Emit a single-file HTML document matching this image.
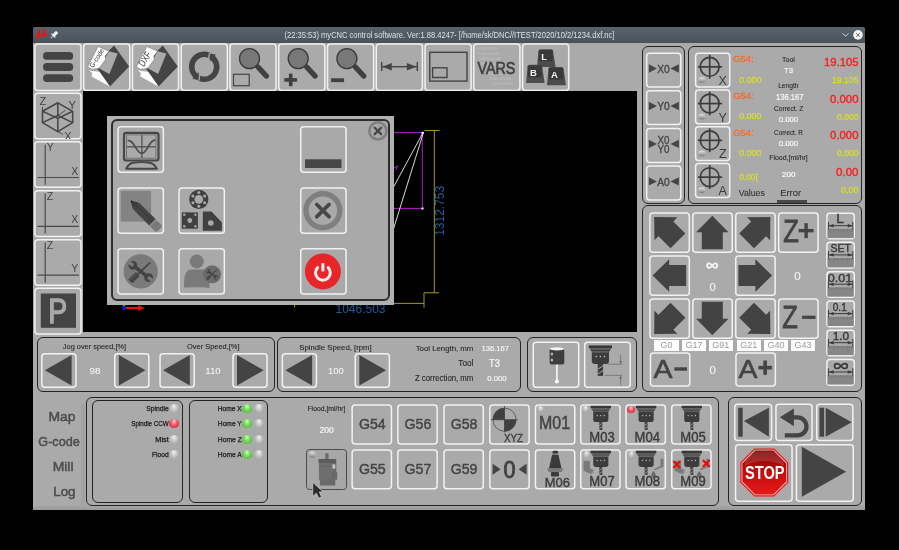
<!DOCTYPE html><html><head><meta charset="utf-8"><style>
html,body{margin:0;padding:0}
body{width:899px;height:550px;background:#000;position:relative;overflow:hidden;font-family:"Liberation Sans",sans-serif}
.a,.b,.p,.t,.s,.led{position:absolute;box-sizing:border-box}
.t{white-space:nowrap}
.s,.a{will-change:transform}
.b{border:1.5px solid #f4f4f4;border-radius:3.5px;background:#a9a9a9}
.p{border:1.4px solid #242424;border-radius:6px}
.led{border-radius:50%;background:radial-gradient(ellipse at 50% 28%,#f2f2f2 0,#cfcfcf 30%,#b4b4b4 62%,#8e8e8e 100%)}
.lg{background:radial-gradient(ellipse at 50% 28%,#d8ffd0 0,#8ae070 30%,#62cc48 62%,#3a9a2a 100%)}
.lr{background:radial-gradient(ellipse at 50% 28%,#ffe0e0 0,#f87080 30%,#ee3848 62%,#b01828 100%)}
</style></head><body>
<svg width="0" height="0" style="position:absolute"><defs><linearGradient id="ledg" x1="0" y1="0" x2="0" y2="1"><stop offset="0" stop-color="#e4e4e4"/><stop offset="0.45" stop-color="#b8b8b8"/><stop offset="1" stop-color="#7c7c7c"/></linearGradient></defs></svg>
<div class="a" style="left:33.2px;top:27px;width:832.3px;height:483.3px;background:linear-gradient(#aaaaaa 0,#aaaaaa 98.8%,#9a9a9a 100%);border-radius:3px 3px 0 0"></div>
<div class="a" style="left:33.2px;top:27px;width:832.3px;height:15.7px;background:linear-gradient(#59636c,#48525b);border-radius:3px 3px 0 0"></div>
<svg class="s" style="left:33px;top:27px;" width="31" height="17" viewBox="0 0 31 17"><g transform="translate(0.000,0.000)"><path d="M3.4,12.6 L6.6,3 Q5,9 7.4,9 Q10,9 11.8,3 Q10.4,9 12,9 Q12.9,9 13.4,7.6" fill="none" stroke="#ff0a0a" stroke-width="1.7" stroke-linecap="round" stroke-linejoin="round"/><g transform="translate(21,8) rotate(45)"><rect x="-1.6" y="-4.5" width="3.2" height="5" rx="0.8" fill="#f2f2f2"/><rect x="-2.6" y="0.3" width="5.2" height="1.2" fill="#f2f2f2"/><rect x="-0.4" y="1.5" width="0.8" height="3" fill="#e0e0e0"/></g><path d="M817,0" /></g></svg>
<svg class="s" style="left:838px;top:28px;" width="29" height="15" viewBox="0 0 29 15"><g transform="translate(0.000,0.000)"><polyline points="4.5,5.3 7.5,8.3 10.5,5.3" fill="none" stroke="#dfe3e6" stroke-width="0.9"/><circle cx="20" cy="6.9" r="4.8" fill="#f4f4f4"/><g stroke="#555" stroke-width="0.9"><line x1="18.2" y1="5.1" x2="21.8" y2="8.7"/><line x1="21.8" y1="5.1" x2="18.2" y2="8.7"/></g></g></svg>
<svg class="s" style="left:0;top:0" width="899" height="550"><g fill="none" stroke="#f2f2f2" stroke-width="1.5"><rect x="34.90" y="43.95" width="46.10" height="46.60" rx="3"/><rect x="83.67" y="43.95" width="46.10" height="46.60" rx="3"/><rect x="132.44" y="43.95" width="46.10" height="46.60" rx="3"/><rect x="181.21" y="43.95" width="46.10" height="46.60" rx="3"/><rect x="229.98" y="43.95" width="46.10" height="46.60" rx="3"/><rect x="278.75" y="43.95" width="46.10" height="46.60" rx="3"/><rect x="327.52" y="43.95" width="46.10" height="46.60" rx="3"/><rect x="376.29" y="43.95" width="46.10" height="46.60" rx="3"/><rect x="425.06" y="43.95" width="46.10" height="46.60" rx="3"/><rect x="473.83" y="43.95" width="46.10" height="46.60" rx="3"/><rect x="522.60" y="43.95" width="46.10" height="46.60" rx="3"/><rect x="34.90" y="93.25" width="46.10" height="45.60" rx="3"/><rect x="34.90" y="141.75" width="46.10" height="45.60" rx="3"/><rect x="34.90" y="190.85" width="46.10" height="45.60" rx="3"/><rect x="34.90" y="239.65" width="46.10" height="45.60" rx="3"/><rect x="34.90" y="288.35" width="46.10" height="45.60" rx="3"/><rect x="646.65" y="53.20" width="34.15" height="33.90" rx="3"/><rect x="646.65" y="90.65" width="34.15" height="33.90" rx="3"/><rect x="646.65" y="128.55" width="34.15" height="33.90" rx="3"/><rect x="646.65" y="166.05" width="34.15" height="33.90" rx="3"/><rect x="695.60" y="53.20" width="34.10" height="33.90" rx="3"/><rect x="695.60" y="89.90" width="34.10" height="33.90" rx="3"/><rect x="695.60" y="126.70" width="34.10" height="33.90" rx="3"/><rect x="695.60" y="163.50" width="34.10" height="33.90" rx="3"/><rect x="649.90" y="213.10" width="39.40" height="39.20" rx="3"/><rect x="692.85" y="213.10" width="39.40" height="39.20" rx="3"/><rect x="735.75" y="213.10" width="39.40" height="39.20" rx="3"/><rect x="649.90" y="256.10" width="39.40" height="39.20" rx="3"/><rect x="735.75" y="256.10" width="39.40" height="39.20" rx="3"/><rect x="649.90" y="299.05" width="39.40" height="39.20" rx="3"/><rect x="692.85" y="299.05" width="39.40" height="39.20" rx="3"/><rect x="735.75" y="299.05" width="39.40" height="39.20" rx="3"/><rect x="778.65" y="213.10" width="39.40" height="39.20" rx="3"/><rect x="778.65" y="299.05" width="39.40" height="39.20" rx="3"/><rect x="650.45" y="353.05" width="39.40" height="32.90" rx="3"/><rect x="735.95" y="353.05" width="39.40" height="32.90" rx="3"/><rect x="826.95" y="213.15" width="27.30" height="25.70" rx="3"/><rect x="826.95" y="242.35" width="27.30" height="25.70" rx="3"/><rect x="826.95" y="271.65" width="27.30" height="25.70" rx="3"/><rect x="826.95" y="301.05" width="27.30" height="25.70" rx="3"/><rect x="826.95" y="330.15" width="27.30" height="25.70" rx="3"/><rect x="826.95" y="359.45" width="27.30" height="25.70" rx="3"/><rect x="41.85" y="353.65" width="34.10" height="33.70" rx="3"/><rect x="114.75" y="353.65" width="34.10" height="33.70" rx="3"/><rect x="160.05" y="353.65" width="34.10" height="33.70" rx="3"/><rect x="232.95" y="353.65" width="34.10" height="33.70" rx="3"/><rect x="282.35" y="353.65" width="34.10" height="33.70" rx="3"/><rect x="355.25" y="353.65" width="34.10" height="33.70" rx="3"/><rect x="533.25" y="342.15" width="45.50" height="45.10" rx="3"/><rect x="584.65" y="342.15" width="45.60" height="45.10" rx="3"/><rect x="352.15" y="405.05" width="39.30" height="38.90" rx="3"/><rect x="352.15" y="449.95" width="39.30" height="38.90" rx="3"/><rect x="397.85" y="405.05" width="39.30" height="38.90" rx="3"/><rect x="397.85" y="449.95" width="39.30" height="38.90" rx="3"/><rect x="443.95" y="405.05" width="39.30" height="38.90" rx="3"/><rect x="443.95" y="449.95" width="39.30" height="38.90" rx="3"/><rect x="489.85" y="405.05" width="39.30" height="38.90" rx="3"/><rect x="489.85" y="449.95" width="39.30" height="38.90" rx="3"/><rect x="535.45" y="405.05" width="39.30" height="38.90" rx="3"/><rect x="535.45" y="449.95" width="39.30" height="38.90" rx="3"/><rect x="580.75" y="405.05" width="39.30" height="38.90" rx="3"/><rect x="580.75" y="449.95" width="39.30" height="38.90" rx="3"/><rect x="626.05" y="405.05" width="39.30" height="38.90" rx="3"/><rect x="626.05" y="449.95" width="39.30" height="38.90" rx="3"/><rect x="671.75" y="405.05" width="39.30" height="38.90" rx="3"/><rect x="671.75" y="449.95" width="39.30" height="38.90" rx="3"/><rect x="734.75" y="404.35" width="36.80" height="36.10" rx="3"/><rect x="775.95" y="404.35" width="36.10" height="36.10" rx="3"/><rect x="816.75" y="404.35" width="36.10" height="36.10" rx="3"/><rect x="735.55" y="444.65" width="56.50" height="56.50" rx="3"/><rect x="796.45" y="444.65" width="56.80" height="56.50" rx="3"/></g></svg>
<svg class="s" style="left:35px;top:43px;" width="48" height="49" viewBox="0 0 48 49"><g transform="translate(0.000,0.000)"><g fill="#444"><rect x="8" y="9" width="30.2" height="7.8" rx="3.9"/><rect x="8" y="20.1" width="30.2" height="7.8" rx="3.9"/><rect x="8" y="31.2" width="30.2" height="7.8" rx="3.9"/></g></g></svg>
<svg class="s" style="left:83px;top:43px;" width="48" height="49" viewBox="0 0 48 49"><g transform="translate(0.700,0.000)"><polygon fill="#454545" points="30.4,2.6 45.4,23.6 26.2,43.6 11,22"/><polygon fill="#aaa" points="25.3,8.3 34,10.5 25.7,31 15.3,25.3"/><polygon fill="#fff" stroke="#555" stroke-width="0.4" points="14.4,3.5 25.3,8.3 21.4,13.1 21.8,16.6 15.3,25.3 8.3,26.2 3.9,24"/><polygon fill="#fff" points="5.2,27 8.3,27.9 15.7,28.8 26.2,43.6 7.9,33.6 8.5,30"/><text x="0" y="0" transform="translate(9.6,25.2) rotate(-58)" font-size="7" fill="#333" font-family="Liberation Sans" textLength="21" lengthAdjust="spacingAndGlyphs">G-code</text></g></svg>
<svg class="s" style="left:132px;top:43px;" width="48" height="49" viewBox="0 0 48 49"><g transform="translate(0.400,0.000)"><polygon fill="#454545" points="30.4,2.6 45.4,23.6 26.2,43.6 11,22"/><polygon fill="#aaa" points="25.3,8.3 34,10.5 25.7,31 15.3,25.3"/><polygon fill="#fff" stroke="#555" stroke-width="0.4" points="14.4,3.5 25.3,8.3 21.4,13.1 21.8,16.6 15.3,25.3 8.3,26.2 3.9,24"/><polygon fill="#fff" points="5.2,27 8.3,27.9 15.7,28.8 26.2,43.6 7.9,33.6 8.5,30"/><text x="0" y="0" transform="translate(11.4,24.2) rotate(-58)" font-size="10" fill="#333" font-family="Liberation Sans" textLength="15" lengthAdjust="spacingAndGlyphs">DXF</text></g></svg>
<svg class="s" style="left:181px;top:43px;" width="48" height="49" viewBox="0 0 48 49"><g transform="translate(0.000,0.000)"><g fill="none" stroke="#444" stroke-width="5.5"><path d="M28.06,12.33 A12.45,12.45 0 0 0 17.55,34.89"/><path d="M28.85,12.71 A12.45,12.45 0 0 1 18.33,35.27"/></g><g fill="#444"><polygon points="28.6,11 35,11.6 28.6,18.6"/><polygon points="17.8,36.6 11.4,36 17.8,29"/></g><g stroke="#a9a9a9" stroke-width="1"><line x1="28.1" y1="10" x2="28.1" y2="19"/><line x1="18.3" y1="28.6" x2="18.3" y2="37.6"/></g></g></svg>
<svg class="s" style="left:229px;top:43px;" width="48" height="49" viewBox="0 0 48 49"><g transform="translate(0.700,0.000)"><line x1="28.3" y1="24" x2="36.6" y2="33" stroke="#404040" stroke-width="5.4" stroke-linecap="round"/><circle cx="19.8" cy="15.6" r="10" fill="#787878" stroke="#3a3a3a" stroke-width="1.3"/><rect x="3.8" y="31.3" width="15.7" height="11.4" fill="none" stroke="#444" stroke-width="1.2"/></g></svg>
<svg class="s" style="left:278px;top:43px;" width="48" height="49" viewBox="0 0 48 49"><g transform="translate(0.400,0.000)"><line x1="28.3" y1="24" x2="36.6" y2="33" stroke="#404040" stroke-width="5.4" stroke-linecap="round"/><circle cx="19.8" cy="15.6" r="10" fill="#787878" stroke="#3a3a3a" stroke-width="1.3"/><rect x="5.9" y="35.1" width="12.8" height="3.6" fill="#404040"/><rect x="10.5" y="30.6" width="3.6" height="12.6" fill="#404040"/></g></svg>
<svg class="s" style="left:327px;top:43px;" width="48" height="49" viewBox="0 0 48 49"><g transform="translate(0.100,0.000)"><line x1="28.3" y1="24" x2="36.6" y2="33" stroke="#404040" stroke-width="5.4" stroke-linecap="round"/><circle cx="19.8" cy="15.6" r="10" fill="#787878" stroke="#3a3a3a" stroke-width="1.3"/><rect x="4" y="35.3" width="13" height="3.8" fill="#404040"/></g></svg>
<svg class="s" style="left:375px;top:43px;" width="48" height="49" viewBox="0 0 48 49"><g transform="translate(0.800,0.000)"><g fill="#454545"><rect x="5.2" y="19" width="1.4" height="9"/><rect x="40.8" y="19" width="1.4" height="9"/><rect x="6" y="23" width="35" height="1.4"/><polygon points="6.5,23.7 16,20 16,27.4"/><polygon points="40.8,23.7 31,20 31,27.4"/></g></g></svg>
<svg class="s" style="left:424px;top:43px;" width="48" height="49" viewBox="0 0 48 49"><g transform="translate(0.400,0.000)"><g fill="none" stroke="#444" stroke-width="1.4"><rect x="5.4" y="9.3" width="37.2" height="28.8"/><rect x="8.2" y="24.8" width="14.4" height="9.7"/></g></g></svg>
<svg class="s" style="left:473px;top:43px;" width="48" height="49" viewBox="0 0 48 49"><g transform="translate(0.100,0.000)"><text x="2" y="7" font-size="3.2" fill="#c4c4c4" font-family="Liberation Sans">#5029=123.456</text><text x="4" y="12" font-size="3.2" fill="#c4c4c4" font-family="Liberation Sans">#5029=123.456</text><text x="6" y="17" font-size="3.2" fill="#c4c4c4" font-family="Liberation Sans">#5029=123.456</text><text x="8" y="22" font-size="3.2" fill="#c4c4c4" font-family="Liberation Sans">#5029=123.456</text><text x="14" y="32" font-size="3.2" fill="#c4c4c4" font-family="Liberation Sans">#5029=123.456</text><text x="16" y="37" font-size="3.2" fill="#c4c4c4" font-family="Liberation Sans">#5029=123.456</text><text x="18" y="42" font-size="3.2" fill="#c4c4c4" font-family="Liberation Sans">#5029=123.456</text><text x="23.3" y="30.6" text-anchor="middle" font-size="16" fill="#404040" stroke="#404040" stroke-width="0.6" font-family="Liberation Sans" textLength="38" lengthAdjust="spacingAndGlyphs">VARS</text></g></svg>
<svg class="s" style="left:521px;top:43px;" width="48" height="49" viewBox="0 0 48 49"><g transform="translate(0.800,0.000)"><path d="M15.2,24.0 L16.7,7.8 Q17.2,6.3 18.7,6.3 L29.200000000000003,6.3 Q30.700000000000003,6.3 31.200000000000003,7.8 L33.7,24.0 Z" fill="#4c4c4c"/><rect x="17.0" y="7.1" width="13.9" height="11.2" rx="1" fill="#393939"/><text x="22.45" y="16.95" text-anchor="middle" font-size="9.5" font-weight="bold" fill="#f4f4f4" font-family="Liberation Sans">L</text><path d="M4.3,39.9 L5.8,23.2 Q6.3,21.7 7.8,21.7 L18.3,21.7 Q19.8,21.7 20.3,23.2 L22.8,39.9 Z" fill="#4c4c4c"/><rect x="6.1" y="22.5" width="13.9" height="11.7" rx="1" fill="#393939"/><text x="11.55" y="32.599999999999994" text-anchor="middle" font-size="9.5" font-weight="bold" fill="#f4f4f4" font-family="Liberation Sans">B</text><path d="M25.2,42.2 L26.7,25.5 Q27.2,24 28.7,24 L39.7,24 Q41.2,24 41.7,25.5 L44.2,42.2 Z" fill="#4c4c4c"/><rect x="27.0" y="24.8" width="14.4" height="11.7" rx="1" fill="#393939"/><text x="32.7" y="34.9" text-anchor="middle" font-size="9.5" font-weight="bold" fill="#f4f4f4" font-family="Liberation Sans">A</text></g></svg>
<svg class="s" style="left:35px;top:92px;" width="48" height="47" viewBox="0 0 48 47"><g transform="translate(0.000,0.500)"><g fill="none" stroke="#474747" stroke-width="1.55" stroke-linejoin="round"><polygon points="22.8,10.3 37.7,18.8 37.7,30.1 22.8,39.1 7.5,30.1 7.5,18.8"/><polyline points="7.5,18.8 22.8,25.9 37.7,18.8"/><line x1="22.8" y1="25.9" x2="22.8" y2="39.1"/><polyline points="7.5,30.1 22.8,23 37.7,30.1"/><line x1="22.8" y1="23" x2="22.8" y2="10.3"/></g><g stroke="#444" stroke-width="0.9"><line x1="7.5" y1="18.8" x2="7.5" y2="14.5"/><line x1="22.8" y1="23" x2="30.6" y2="17.8"/><line x1="22.8" y1="39.1" x2="28" y2="42"/></g><g font-family="Liberation Sans" font-size="11" fill="#444"><text x="4.6" y="12">Z</text><text x="33.5" y="16">Y</text><text x="29.3" y="47">X</text></g></g></svg>
<svg class="s" style="left:35px;top:141px;" width="48" height="47" viewBox="0 0 48 47"><g transform="translate(0.000,0.300)"><g stroke="#4a4a4a" stroke-width="1.2"><line x1="10.2" y1="3.5" x2="10.2" y2="43.5"/><line x1="2.5" y1="36.2" x2="44" y2="36.2"/></g><g font-family="Liberation Sans" font-size="10.5" fill="#444"><text x="11.8" y="9.6">Y</text><text x="36.2" y="33.3">X</text></g></g></svg>
<svg class="s" style="left:35px;top:190px;" width="48" height="47" viewBox="0 0 48 47"><g transform="translate(0.000,0.100)"><g stroke="#4a4a4a" stroke-width="1.2"><line x1="10.2" y1="3.5" x2="10.2" y2="43.5"/><line x1="2.5" y1="36.2" x2="44" y2="36.2"/></g><g font-family="Liberation Sans" font-size="10.5" fill="#444"><text x="11.8" y="9.6">Z</text><text x="36.2" y="33.3">X</text></g></g></svg>
<svg class="s" style="left:35px;top:238px;" width="48" height="47" viewBox="0 0 48 47"><g transform="translate(0.000,0.900)"><g stroke="#4a4a4a" stroke-width="1.2"><line x1="10.2" y1="3.5" x2="10.2" y2="43.5"/><line x1="2.5" y1="36.2" x2="44" y2="36.2"/></g><g font-family="Liberation Sans" font-size="10.5" fill="#444"><text x="11.8" y="9.6">Z</text><text x="36.2" y="33.3">Y</text></g></g></svg>
<svg class="s" style="left:35px;top:287px;" width="48" height="47" viewBox="0 0 48 47"><g transform="translate(0.000,0.700)"><rect x="5.8" y="5.8" width="35.2" height="34.3" fill="#444"/><text x="13.3" y="35" font-family="Liberation Sans" font-size="35" fill="#a8a8a8" stroke="#a8a8a8" stroke-width="1.3" textLength="19" lengthAdjust="spacingAndGlyphs">P</text></g></svg>
<div class="a" style="left:83px;top:91.2px;width:553.5px;height:240.6px;background:#000"></div>
<svg class="s" style="left:0px;top:0px;" width="900" height="551" viewBox="0 0 900 551"><g transform="translate(0.000,0.000)"><g fill="none" stroke-width="1"><polyline stroke="#b01cc8" points="393,132.6 422.3,132.6 422.3,208.4 393,208.4"/><path stroke="#b01cc8" d="M393.5,168.5 L397.5,166 L396,170"/><line stroke="#d8d8d8" x1="423.2" y1="132.3" x2="393.2" y2="187.7"/><line stroke="#d8d8d8" x1="423.6" y1="132" x2="393.3" y2="229.6"/><g stroke="#a09a1c"><line x1="434.3" y1="130.5" x2="434.3" y2="292.8"/><line x1="424.6" y1="130.5" x2="439.5" y2="130.5"/><line x1="424" y1="292.8" x2="439" y2="292.8"/><line x1="393" y1="303.4" x2="424" y2="303.4"/><line x1="424" y1="292.8" x2="424" y2="307.7"/><line x1="294.6" y1="304" x2="294.6" y2="307.5"/></g></g><rect x="421.5" y="207.5" width="2" height="2" fill="#fff"/><rect x="421.5" y="131.8" width="2" height="2" fill="#fff"/><text transform="translate(444.3,235.8) rotate(-90)" font-family="Liberation Sans" font-size="12" fill="#1f5d9c" textLength="50" lengthAdjust="spacingAndGlyphs">1312.753</text><text x="335.5" y="312.5" font-family="Liberation Sans" font-size="12" fill="#1f5d9c" textLength="50" lengthAdjust="spacingAndGlyphs">1046.503</text><line x1="124" y1="308" x2="140" y2="308" stroke="#e81010" stroke-width="2.2"/><polygon points="138,305.3 144.8,308 138,310.7" fill="#e81010"/><circle cx="124" cy="308" r="2.3" fill="#1010b0"/><circle cx="124" cy="305" r="1.2" fill="#20e020"/></g></svg>
<div class="a" style="left:107.1px;top:115.9px;width:286.6px;height:188.7px;background:#b1b1b1"></div>
<div class="a" style="left:110.6px;top:119.4px;width:279.2px;height:181.5px;background:#a9a9a9;border:2px solid #2e2e2e;border-radius:6px;box-sizing:border-box"></div>
<svg class="s" style="left:0;top:0" width="899" height="550"><g fill="none" stroke="#f2f2f2" stroke-width="1.5"><rect x="118.05" y="126.85" width="45.30" height="45.30" rx="3"/><rect x="300.75" y="126.85" width="45.30" height="45.30" rx="3"/><rect x="118.05" y="187.95" width="45.30" height="45.30" rx="3"/><rect x="179.05" y="187.95" width="45.30" height="45.30" rx="3"/><rect x="300.75" y="187.95" width="45.30" height="45.30" rx="3"/><rect x="118.05" y="248.75" width="45.30" height="45.30" rx="3"/><rect x="179.05" y="248.75" width="45.30" height="45.30" rx="3"/><rect x="300.75" y="248.75" width="45.30" height="45.30" rx="3"/></g></svg>
<svg class="s" style="left:117px;top:126px;" width="48" height="48" viewBox="0 0 48 48"><g transform="translate(0.300,0.100)"><rect x="6.7" y="6.7" width="34.5" height="27.7" rx="2.2" fill="none" stroke="#474747" stroke-width="2.2"/><rect x="9.2" y="8.8" width="29.4" height="23.3" fill="none" stroke="#6e6e6e" stroke-width="0.9"/><g stroke="#4a4a4a" fill="none"><line x1="24.6" y1="9.2" x2="24.6" y2="32" stroke-width="1.2"/><line x1="9.6" y1="20.7" x2="38.3" y2="20.7" stroke-width="1.2"/><path d="M10.3,14.5 C16.5,13 19,27.3 24.4,27.3 C30,27.3 32,13 38,14.1" stroke-width="1.7"/></g><path d="M8.8,42.6 Q12,37 16,36.6 Q24,35.4 32,36.6 Q36.5,37 39.6,42.6 Z" fill="none" stroke="#474747" stroke-width="1.9" stroke-linejoin="round"/></g></svg>
<svg class="s" style="left:300px;top:126px;" width="48" height="48" viewBox="0 0 48 48"><g transform="translate(0.000,0.100)"><rect x="5" y="33.2" width="36.5" height="8.7" fill="#474747"/></g></svg>
<svg class="s" style="left:117px;top:187px;" width="48" height="48" viewBox="0 0 48 48"><g transform="translate(0.300,0.200)"><rect x="3.4" y="3.7" width="30.4" height="30.7" fill="#838383"/><g transform="translate(13.4,13.4) rotate(45)"><polygon points="0,0 7.5,-4.5 7.5,4.5" fill="#3a3a3a"/><polygon points="2.2,-1.3 2.2,1.3 0,0" fill="#222"/><rect x="7.5" y="-4.5" width="24.5" height="9" fill="#444"/><rect x="7.5" y="-1.2" width="24.5" height="1" fill="#3a3a3a"/><rect x="32" y="-4.5" width="8.6" height="9" rx="1.8" fill="#7a7a7a"/><rect x="30.6" y="-4.5" width="1.4" height="9" fill="#909090"/></g></g></svg>
<svg class="s" style="left:178px;top:187px;" width="48" height="48" viewBox="0 0 48 48"><g transform="translate(0.300,0.200)"><circle cx="20.5" cy="12.2" r="9.6" fill="#404040"/><circle cx="20.5" cy="12.2" r="4.3" fill="#a9a9a9"/><circle cx="20.5" cy="5.3999999999999995" r="1.5" fill="#a9a9a9"/><circle cx="26.388972745734183" cy="8.8" r="1.5" fill="#a9a9a9"/><circle cx="26.388972745734183" cy="15.599999999999998" r="1.5" fill="#a9a9a9"/><circle cx="20.5" cy="19.0" r="1.5" fill="#a9a9a9"/><circle cx="14.611027254265817" cy="15.599999999999998" r="1.5" fill="#a9a9a9"/><circle cx="14.611027254265817" cy="8.799999999999999" r="1.5" fill="#a9a9a9"/><rect x="3.5" y="25.2" width="16.1" height="16.3" fill="#404040"/><g fill="#a9a9a9"><circle cx="11.5" cy="33.3" r="2.4"/><circle cx="6" cy="27.6" r="1.2"/><circle cx="17.1" cy="27.6" r="1.2"/><circle cx="6" cy="39" r="1.2"/><circle cx="17.1" cy="39" r="1.2"/></g><polygon points="24.5,24.2 33.2,24.2 43.6,35.3 43.6,43.5 24.5,43.5" fill="#404040"/><circle cx="32.5" cy="35.8" r="2.8" fill="#a9a9a9"/></g></svg>
<svg class="s" style="left:300px;top:187px;" width="48" height="48" viewBox="0 0 48 48"><g transform="translate(0.000,0.200)"><circle cx="22.9" cy="23.4" r="16.9" fill="none" stroke="#7f7f7f" stroke-width="5.4"/><g stroke="#474747" stroke-width="3.8" stroke-linecap="round"><line x1="16.8" y1="17.3" x2="29" y2="29.5"/><line x1="29" y1="17.3" x2="16.8" y2="29.5"/></g></g></svg>
<svg class="s" style="left:117px;top:248px;" width="48" height="48" viewBox="0 0 48 48"><g transform="translate(0.300,0.000)"><circle cx="23.4" cy="23.4" r="17.1" fill="#7a7a7a"/><g transform="translate(23.4,23.4)"><g transform="scale(1)"><g transform="rotate(38)" fill="#444"><rect x="-9" y="-1.8" width="18" height="3.6"/><circle cx="-10" cy="0" r="4.4"/><circle cx="10" cy="0" r="4.4"/></g><g transform="rotate(38)" fill="#7a7a7a"><rect x="-15" y="-1.7" width="5.5" height="3.4"/><rect x="9.5" y="-1.7" width="5.5" height="3.4"/></g><g transform="rotate(-43)" fill="#444"><rect x="-14.5" y="-2.8" width="10.5" height="5.6" rx="1"/><rect x="-4" y="-0.9" width="17" height="1.8"/><g stroke="#7a7a7a" stroke-width="0.7"><line x1="-12" y1="-2.8" x2="-12" y2="-0.5"/><line x1="-9.5" y1="-2.8" x2="-9.5" y2="-0.5"/><line x1="-7" y1="-2.8" x2="-7" y2="-0.5"/></g></g></g></g></g></svg>
<svg class="s" style="left:178px;top:248px;" width="48" height="48" viewBox="0 0 48 48"><g transform="translate(0.300,0.000)"><circle cx="18.5" cy="13.4" r="7" fill="#7a7a7a"/><path d="M5.8,39.4 C5.5,28 7,21.6 13,21.4 L25,21.4 C31,21.6 31.5,30 31.2,40 C22,38.5 14,40 5.8,39.4 Z" fill="#7a7a7a"/><circle cx="33.8" cy="26.3" r="9" fill="#6c6c6c"/><g transform="translate(33.8,26.3)"><g transform="scale(0.5)"><g transform="rotate(38)" fill="#444"><rect x="-9" y="-1.8" width="18" height="3.6"/><circle cx="-10" cy="0" r="4.4"/><circle cx="10" cy="0" r="4.4"/></g><g transform="rotate(38)" fill="#6c6c6c"><rect x="-15" y="-1.7" width="5.5" height="3.4"/><rect x="9.5" y="-1.7" width="5.5" height="3.4"/></g><g transform="rotate(-43)" fill="#444"><rect x="-14.5" y="-2.8" width="10.5" height="5.6" rx="1"/><rect x="-4" y="-0.9" width="17" height="1.8"/><g stroke="#7a7a7a" stroke-width="0.7"><line x1="-12" y1="-2.8" x2="-12" y2="-0.5"/><line x1="-9.5" y1="-2.8" x2="-9.5" y2="-0.5"/><line x1="-7" y1="-2.8" x2="-7" y2="-0.5"/></g></g></g></g></g></svg>
<svg class="s" style="left:300px;top:248px;" width="48" height="48" viewBox="0 0 48 48"><g transform="translate(0.000,0.000)"><circle cx="22.9" cy="23.4" r="18" fill="#e8262a"/><path d="M17.6,19.6 A7.4,7.4 0 1 0 28.2,19.6" fill="none" stroke="#f4eeee" stroke-width="3" stroke-linecap="round"/><line x1="22.9" y1="15.2" x2="22.9" y2="23.4" stroke="#f4eeee" stroke-width="3" stroke-linecap="butt"/></g></svg>
<svg class="s" style="left:366px;top:119px;" width="25" height="25" viewBox="0 0 25 25"><g transform="translate(0.000,0.000)"><circle cx="11.9" cy="11.9" r="8.6" fill="#a6a6a6" stroke="#808080" stroke-width="2.6"/><g stroke="#474747" stroke-width="2.3" stroke-linecap="round"><line x1="8.7" y1="8.7" x2="15.1" y2="15.1"/><line x1="15.1" y1="8.7" x2="8.7" y2="15.1"/></g></g></svg>
<div class="p" style="left:642.1px;top:45.6px;width:42.9px;height:158.5px;"></div>
<div class="p" style="left:687.8px;top:45.6px;width:174.2px;height:158.5px;"></div>
<div class="p" style="left:642.1px;top:204.6px;width:219.9px;height:187.5px;"></div>
<svg class="s" style="left:646px;top:52px;" width="36" height="36" viewBox="0 0 36 36"><g transform="translate(0.100,0.450)"><polygon points="2.7,11.9 10.8,16.1 2.7,20.3" fill="#454545"/><polygon points="32.8,11.9 24.3,16.1 32.8,20.3" fill="#454545"/><text x="17.4" y="20.3" text-anchor="middle" font-family="Liberation Sans" font-size="11" fill="#444" stroke="#444" stroke-width="0.35" textLength="12.5" lengthAdjust="spacingAndGlyphs">X0</text></g></svg>
<svg class="s" style="left:646px;top:89px;" width="36" height="36" viewBox="0 0 36 36"><g transform="translate(0.100,0.900)"><polygon points="2.7,11.9 10.8,16.1 2.7,20.3" fill="#454545"/><polygon points="32.8,11.9 24.3,16.1 32.8,20.3" fill="#454545"/><text x="17.4" y="20.3" text-anchor="middle" font-family="Liberation Sans" font-size="11" fill="#444" stroke="#444" stroke-width="0.35" textLength="12.5" lengthAdjust="spacingAndGlyphs">Y0</text></g></svg>
<svg class="s" style="left:646px;top:127px;" width="36" height="36" viewBox="0 0 36 36"><g transform="translate(0.100,0.800)"><polygon points="2.7,11.9 10.8,16.1 2.7,20.3" fill="#454545"/><polygon points="32.8,11.9 24.3,16.1 32.8,20.3" fill="#454545"/><text x="17.4" y="16" text-anchor="middle" font-family="Liberation Sans" font-size="10" fill="#444" stroke="#444" stroke-width="0.3" textLength="12" lengthAdjust="spacingAndGlyphs">X0</text><text x="17.4" y="25.5" text-anchor="middle" font-family="Liberation Sans" font-size="10" fill="#444" stroke="#444" stroke-width="0.3" textLength="12" lengthAdjust="spacingAndGlyphs">Y0</text></g></svg>
<svg class="s" style="left:646px;top:165px;" width="36" height="36" viewBox="0 0 36 36"><g transform="translate(0.100,0.300)"><polygon points="2.7,11.9 10.8,16.1 2.7,20.3" fill="#454545"/><polygon points="32.8,11.9 24.3,16.1 32.8,20.3" fill="#454545"/><text x="17.4" y="20.3" text-anchor="middle" font-family="Liberation Sans" font-size="11" fill="#444" stroke="#444" stroke-width="0.35" textLength="12.5" lengthAdjust="spacingAndGlyphs">A0</text></g></svg>
<svg class="s" style="left:695px;top:52px;" width="36" height="37" viewBox="0 0 36 37"><g transform="translate(0.000,0.450)"><g stroke="#3c3c3c" stroke-width="1.7" fill="none"><circle cx="14.7" cy="14.4" r="9.4"/><line x1="2.9" y1="14.4" x2="27.1" y2="14.4"/><line x1="14.7" y1="2.3" x2="14.7" y2="26.2"/></g><text x="27.8" y="32.4" text-anchor="middle" font-family="Liberation Sans" font-size="12.6" fill="#3c3c3c">X</text><ellipse cx="6.85" cy="27.5" rx="3.6" ry="2.9" fill="url(#ledg)"/></g></svg>
<svg class="s" style="left:695px;top:89px;" width="36" height="37" viewBox="0 0 36 37"><g transform="translate(0.000,0.150)"><g stroke="#3c3c3c" stroke-width="1.7" fill="none"><circle cx="14.7" cy="14.4" r="9.4"/><line x1="2.9" y1="14.4" x2="27.1" y2="14.4"/><line x1="14.7" y1="2.3" x2="14.7" y2="26.2"/></g><text x="27.8" y="32.4" text-anchor="middle" font-family="Liberation Sans" font-size="12.6" fill="#3c3c3c">Y</text><ellipse cx="6.85" cy="27.5" rx="3.6" ry="2.9" fill="url(#ledg)"/></g></svg>
<svg class="s" style="left:695px;top:125px;" width="36" height="37" viewBox="0 0 36 37"><g transform="translate(0.000,0.950)"><g stroke="#3c3c3c" stroke-width="1.7" fill="none"><circle cx="14.7" cy="14.4" r="9.4"/><line x1="2.9" y1="14.4" x2="27.1" y2="14.4"/><line x1="14.7" y1="2.3" x2="14.7" y2="26.2"/></g><text x="27.8" y="32.4" text-anchor="middle" font-family="Liberation Sans" font-size="12.6" fill="#3c3c3c">Z</text><ellipse cx="6.85" cy="27.5" rx="3.6" ry="2.9" fill="url(#ledg)"/></g></svg>
<svg class="s" style="left:695px;top:162px;" width="36" height="37" viewBox="0 0 36 37"><g transform="translate(0.000,0.750)"><g stroke="#3c3c3c" stroke-width="1.7" fill="none"><circle cx="14.7" cy="14.4" r="9.4"/><line x1="2.9" y1="14.4" x2="27.1" y2="14.4"/><line x1="14.7" y1="2.3" x2="14.7" y2="26.2"/></g><text x="27.8" y="32.4" text-anchor="middle" font-family="Liberation Sans" font-size="12.6" fill="#3c3c3c">A</text><ellipse cx="6.85" cy="27.5" rx="3.6" ry="2.9" fill="url(#ledg)"/></g></svg>
<div class="a" style="left:777px;top:200.2px;width:30px;height:2.6px;background:#484848"></div>
<svg class="s" style="left:649px;top:212px;" width="42" height="42" viewBox="0 0 42 42"><g transform="translate(0.150,0.350)"><polygon fill="#434343" transform="translate(16.9,16.599999999999998) rotate(-135)" points="-16.8,-10.5 0.2,-10.5 0.2,-16.2 16.8,0 0.2,16.2 0.2,10.5 -16.8,10.5"/></g></svg>
<svg class="s" style="left:692px;top:212px;" width="42" height="42" viewBox="0 0 42 42"><g transform="translate(0.100,0.350)"><polygon fill="#434343" transform="translate(20.2,20.2) rotate(-90)" points="-16.8,-10.5 0.2,-10.5 0.2,-16.2 16.8,0 0.2,16.2 0.2,10.5 -16.8,10.5"/></g></svg>
<svg class="s" style="left:735px;top:212px;" width="42" height="42" viewBox="0 0 42 42"><g transform="translate(0.000,0.350)"><polygon fill="#434343" transform="translate(23.5,16.599999999999998) rotate(-45)" points="-16.8,-10.5 0.2,-10.5 0.2,-16.2 16.8,0 0.2,16.2 0.2,10.5 -16.8,10.5"/></g></svg>
<svg class="s" style="left:649px;top:255px;" width="42" height="42" viewBox="0 0 42 42"><g transform="translate(0.150,0.350)"><polygon fill="#434343" transform="translate(20.2,20.2) rotate(180)" points="-16.8,-10.5 0.2,-10.5 0.2,-16.2 16.8,0 0.2,16.2 0.2,10.5 -16.8,10.5"/></g></svg>
<svg class="s" style="left:735px;top:255px;" width="42" height="42" viewBox="0 0 42 42"><g transform="translate(0.000,0.350)"><polygon fill="#434343" transform="translate(20.2,20.2) rotate(0)" points="-16.8,-10.5 0.2,-10.5 0.2,-16.2 16.8,0 0.2,16.2 0.2,10.5 -16.8,10.5"/></g></svg>
<svg class="s" style="left:649px;top:298px;" width="42" height="42" viewBox="0 0 42 42"><g transform="translate(0.150,0.300)"><polygon fill="#434343" transform="translate(16.9,23.8) rotate(135)" points="-16.8,-10.5 0.2,-10.5 0.2,-16.2 16.8,0 0.2,16.2 0.2,10.5 -16.8,10.5"/></g></svg>
<svg class="s" style="left:692px;top:298px;" width="42" height="42" viewBox="0 0 42 42"><g transform="translate(0.100,0.300)"><polygon fill="#434343" transform="translate(20.2,20.2) rotate(90)" points="-16.8,-10.5 0.2,-10.5 0.2,-16.2 16.8,0 0.2,16.2 0.2,10.5 -16.8,10.5"/></g></svg>
<svg class="s" style="left:735px;top:298px;" width="42" height="42" viewBox="0 0 42 42"><g transform="translate(0.000,0.300)"><polygon fill="#434343" transform="translate(23.5,23.8) rotate(45)" points="-16.8,-10.5 0.2,-10.5 0.2,-16.2 16.8,0 0.2,16.2 0.2,10.5 -16.8,10.5"/></g></svg>
<svg class="s" style="left:777px;top:212px;" width="42" height="42" viewBox="0 0 42 42"><g transform="translate(0.900,0.350)"><text x="5.4" y="30" font-family="Liberation Sans" font-size="30.5" fill="#444" stroke="#444" stroke-width="0.9" textLength="15.6" lengthAdjust="spacingAndGlyphs">Z</text><g fill="#444"><rect x="20.7" y="16.6" width="15" height="3.4"/><rect x="26.5" y="10.8" width="3.4" height="15"/></g></g></svg>
<svg class="s" style="left:777px;top:298px;" width="42" height="42" viewBox="0 0 42 42"><g transform="translate(0.900,0.300)"><text x="4.4" y="29.3" font-family="Liberation Sans" font-size="30.5" fill="#444" stroke="#444" stroke-width="0.9" textLength="15.6" lengthAdjust="spacingAndGlyphs">Z</text><rect x="24.1" y="17.4" width="13.5" height="3.2" fill="#444"/></g></svg>
<svg class="s" style="left:705px;top:261px;" width="16" height="13" viewBox="0 0 16 13"><g transform="translate(0.000,0.000)"><path d="M7.2,4.6 C5.2,1.6 2.2,1.6 2.2,4.6 C2.2,7.6 5.2,7.6 7.2,4.6 C9.2,1.6 12.2,1.6 12.2,4.6 C12.2,7.6 9.2,7.6 7.2,4.6" fill="none" stroke="#f6f6f6" stroke-width="1.8"/></g></svg>
<div class="a" style="left:654.1px;top:340.4px;width:24.799999999999955px;height:10.5px;background:#fcfcfc;color:#9c9c9c;font-size:9px;line-height:11px;text-align:center">G0</div>
<div class="a" style="left:682.2px;top:340.4px;width:23.799999999999955px;height:10.5px;background:#fcfcfc;color:#9c9c9c;font-size:9px;line-height:11px;text-align:center">G17</div>
<div class="a" style="left:709px;top:340.4px;width:23.600000000000023px;height:10.5px;background:#fcfcfc;color:#9c9c9c;font-size:9px;line-height:11px;text-align:center">G91</div>
<div class="a" style="left:736.7px;top:340.4px;width:23.5px;height:10.5px;background:#fcfcfc;color:#9c9c9c;font-size:9px;line-height:11px;text-align:center">G21</div>
<div class="a" style="left:764px;top:340.4px;width:23.899999999999977px;height:10.5px;background:#fcfcfc;color:#9c9c9c;font-size:9px;line-height:11px;text-align:center">G40</div>
<div class="a" style="left:791px;top:340.4px;width:24.200000000000045px;height:10.5px;background:#fcfcfc;color:#9c9c9c;font-size:9px;line-height:11px;text-align:center">G43</div>
<svg class="s" style="left:649px;top:352px;" width="42" height="36" viewBox="0 0 42 36"><g transform="translate(0.700,0.300)"><text x="3.8" y="25.5" font-family="Liberation Sans" font-size="26.5" fill="#444" stroke="#444" stroke-width="0.6" textLength="19" lengthAdjust="spacingAndGlyphs">A</text><rect x="24.6" y="15" width="12.7" height="3.4" fill="#444"/></g></svg>
<svg class="s" style="left:735px;top:352px;" width="42" height="36" viewBox="0 0 42 36"><g transform="translate(0.200,0.300)"><text x="3.3" y="25.5" font-family="Liberation Sans" font-size="26.5" fill="#444" stroke="#444" stroke-width="0.6" textLength="19" lengthAdjust="spacingAndGlyphs">A</text><g fill="#444"><rect x="23.2" y="13.55" width="13.5" height="3.6"/><rect x="28.15" y="8.2" width="3.6" height="14.3"/></g></g></svg>
<svg class="s" style="left:826px;top:212px;" width="30" height="29" viewBox="0 0 30 29"><g transform="translate(0.200,0.400)"><rect x="1.3" y="16.5" width="26.2" height="9.2" fill="#868686"/><g stroke="#6a6a6a" stroke-width="0.6"><line x1="3.2" y1="16.6" x2="3.2" y2="19.2"/><line x1="5.45" y1="16.6" x2="5.45" y2="18.2"/><line x1="7.7" y1="16.6" x2="7.7" y2="19.2"/><line x1="9.95" y1="16.6" x2="9.95" y2="18.2"/><line x1="12.2" y1="16.6" x2="12.2" y2="19.2"/><line x1="14.45" y1="16.6" x2="14.45" y2="18.2"/><line x1="16.7" y1="16.6" x2="16.7" y2="19.2"/><line x1="18.95" y1="16.6" x2="18.95" y2="18.2"/><line x1="21.2" y1="16.6" x2="21.2" y2="19.2"/><line x1="23.45" y1="16.6" x2="23.45" y2="18.2"/><line x1="25.7" y1="16.6" x2="25.7" y2="19.2"/></g><text x="10.1" y="10.5" font-family="Liberation Sans" font-size="12.86" fill="#3a3a3a" stroke="#3a3a3a" stroke-width="0.4" textLength="7.80" lengthAdjust="spacingAndGlyphs">L</text><g stroke="#3a3a3a" stroke-width="1"><line x1="2.2" y1="9.5" x2="2.2" y2="17"/><line x1="26.6" y1="9.5" x2="26.6" y2="17"/><line x1="2.5" y1="13.3" x2="26.5" y2="13.3"/></g><g fill="#3a3a3a"><polygon points="2.5,13.3 7.5,11.6 7.5,15"/><polygon points="26.5,13.3 21.5,11.6 21.5,15"/></g></g></svg>
<svg class="s" style="left:826px;top:241px;" width="30" height="29" viewBox="0 0 30 29"><g transform="translate(0.200,0.600)"><rect x="1.3" y="16.5" width="26.2" height="9.2" fill="#868686"/><g stroke="#6a6a6a" stroke-width="0.6"><line x1="3.2" y1="16.6" x2="3.2" y2="19.2"/><line x1="5.45" y1="16.6" x2="5.45" y2="18.2"/><line x1="7.7" y1="16.6" x2="7.7" y2="19.2"/><line x1="9.95" y1="16.6" x2="9.95" y2="18.2"/><line x1="12.2" y1="16.6" x2="12.2" y2="19.2"/><line x1="14.45" y1="16.6" x2="14.45" y2="18.2"/><line x1="16.7" y1="16.6" x2="16.7" y2="19.2"/><line x1="18.95" y1="16.6" x2="18.95" y2="18.2"/><line x1="21.2" y1="16.6" x2="21.2" y2="19.2"/><line x1="23.45" y1="16.6" x2="23.45" y2="18.2"/><line x1="25.7" y1="16.6" x2="25.7" y2="19.2"/></g><text x="4.3999999999999995" y="10.2" font-family="Liberation Sans" font-size="10.86" fill="#3a3a3a" stroke="#3a3a3a" stroke-width="0.4" textLength="20.30" lengthAdjust="spacingAndGlyphs">SET</text><g stroke="#3a3a3a" stroke-width="1"><line x1="2.2" y1="9.5" x2="2.2" y2="17"/><line x1="26.6" y1="9.5" x2="26.6" y2="17"/><line x1="2.5" y1="13.3" x2="26.5" y2="13.3"/></g><g fill="#3a3a3a"><polygon points="2.5,13.3 7.5,11.6 7.5,15"/><polygon points="26.5,13.3 21.5,11.6 21.5,15"/></g></g></svg>
<svg class="s" style="left:826px;top:270px;" width="30" height="29" viewBox="0 0 30 29"><g transform="translate(0.200,0.900)"><rect x="1.3" y="16.5" width="26.2" height="9.2" fill="#868686"/><g stroke="#6a6a6a" stroke-width="0.6"><line x1="3.2" y1="16.6" x2="3.2" y2="19.2"/><line x1="5.45" y1="16.6" x2="5.45" y2="18.2"/><line x1="7.7" y1="16.6" x2="7.7" y2="19.2"/><line x1="9.95" y1="16.6" x2="9.95" y2="18.2"/><line x1="12.2" y1="16.6" x2="12.2" y2="19.2"/><line x1="14.45" y1="16.6" x2="14.45" y2="18.2"/><line x1="16.7" y1="16.6" x2="16.7" y2="19.2"/><line x1="18.95" y1="16.6" x2="18.95" y2="18.2"/><line x1="21.2" y1="16.6" x2="21.2" y2="19.2"/><line x1="23.45" y1="16.6" x2="23.45" y2="18.2"/><line x1="25.7" y1="16.6" x2="25.7" y2="19.2"/></g><text x="1.6" y="10.7" font-family="Liberation Sans" font-size="11.00" fill="#3a3a3a" stroke="#3a3a3a" stroke-width="0.4" textLength="24.60" lengthAdjust="spacingAndGlyphs">0.01</text><g stroke="#3a3a3a" stroke-width="1"><line x1="2.2" y1="9.5" x2="2.2" y2="17"/><line x1="26.6" y1="9.5" x2="26.6" y2="17"/><line x1="2.5" y1="13.3" x2="26.5" y2="13.3"/></g><g fill="#3a3a3a"><polygon points="2.5,13.3 7.5,11.6 7.5,15"/><polygon points="26.5,13.3 21.5,11.6 21.5,15"/></g></g></svg>
<svg class="s" style="left:826px;top:300px;" width="30" height="29" viewBox="0 0 30 29"><g transform="translate(0.200,0.300)"><rect x="1.3" y="16.5" width="26.2" height="9.2" fill="#868686"/><g stroke="#6a6a6a" stroke-width="0.6"><line x1="3.2" y1="16.6" x2="3.2" y2="19.2"/><line x1="5.45" y1="16.6" x2="5.45" y2="18.2"/><line x1="7.7" y1="16.6" x2="7.7" y2="19.2"/><line x1="9.95" y1="16.6" x2="9.95" y2="18.2"/><line x1="12.2" y1="16.6" x2="12.2" y2="19.2"/><line x1="14.45" y1="16.6" x2="14.45" y2="18.2"/><line x1="16.7" y1="16.6" x2="16.7" y2="19.2"/><line x1="18.95" y1="16.6" x2="18.95" y2="18.2"/><line x1="21.2" y1="16.6" x2="21.2" y2="19.2"/><line x1="23.45" y1="16.6" x2="23.45" y2="18.2"/><line x1="25.7" y1="16.6" x2="25.7" y2="19.2"/></g><text x="6.5" y="11" font-family="Liberation Sans" font-size="11.00" fill="#3a3a3a" stroke="#3a3a3a" stroke-width="0.4" textLength="14.10" lengthAdjust="spacingAndGlyphs">0.1</text><g stroke="#3a3a3a" stroke-width="1"><line x1="2.2" y1="9.5" x2="2.2" y2="17"/><line x1="26.6" y1="9.5" x2="26.6" y2="17"/><line x1="2.5" y1="13.3" x2="26.5" y2="13.3"/></g><g fill="#3a3a3a"><polygon points="2.5,13.3 7.5,11.6 7.5,15"/><polygon points="26.5,13.3 21.5,11.6 21.5,15"/></g></g></svg>
<svg class="s" style="left:826px;top:329px;" width="30" height="29" viewBox="0 0 30 29"><g transform="translate(0.200,0.400)"><rect x="1.3" y="16.5" width="26.2" height="9.2" fill="#868686"/><g stroke="#6a6a6a" stroke-width="0.6"><line x1="3.2" y1="16.6" x2="3.2" y2="19.2"/><line x1="5.45" y1="16.6" x2="5.45" y2="18.2"/><line x1="7.7" y1="16.6" x2="7.7" y2="19.2"/><line x1="9.95" y1="16.6" x2="9.95" y2="18.2"/><line x1="12.2" y1="16.6" x2="12.2" y2="19.2"/><line x1="14.45" y1="16.6" x2="14.45" y2="18.2"/><line x1="16.7" y1="16.6" x2="16.7" y2="19.2"/><line x1="18.95" y1="16.6" x2="18.95" y2="18.2"/><line x1="21.2" y1="16.6" x2="21.2" y2="19.2"/><line x1="23.45" y1="16.6" x2="23.45" y2="18.2"/><line x1="25.7" y1="16.6" x2="25.7" y2="19.2"/></g><text x="6.5" y="11" font-family="Liberation Sans" font-size="11.14" fill="#3a3a3a" stroke="#3a3a3a" stroke-width="0.4" textLength="16.40" lengthAdjust="spacingAndGlyphs">1.0</text><g stroke="#3a3a3a" stroke-width="1"><line x1="2.2" y1="9.5" x2="2.2" y2="17"/><line x1="26.6" y1="9.5" x2="26.6" y2="17"/><line x1="2.5" y1="13.3" x2="26.5" y2="13.3"/></g><g fill="#3a3a3a"><polygon points="2.5,13.3 7.5,11.6 7.5,15"/><polygon points="26.5,13.3 21.5,11.6 21.5,15"/></g></g></svg>
<svg class="s" style="left:826px;top:358px;" width="30" height="29" viewBox="0 0 30 29"><g transform="translate(0.200,0.700)"><rect x="1.3" y="16.5" width="26.2" height="9.2" fill="#868686"/><g stroke="#6a6a6a" stroke-width="0.6"><line x1="3.2" y1="16.6" x2="3.2" y2="19.2"/><line x1="5.45" y1="16.6" x2="5.45" y2="18.2"/><line x1="7.7" y1="16.6" x2="7.7" y2="19.2"/><line x1="9.95" y1="16.6" x2="9.95" y2="18.2"/><line x1="12.2" y1="16.6" x2="12.2" y2="19.2"/><line x1="14.45" y1="16.6" x2="14.45" y2="18.2"/><line x1="16.7" y1="16.6" x2="16.7" y2="19.2"/><line x1="18.95" y1="16.6" x2="18.95" y2="18.2"/><line x1="21.2" y1="16.6" x2="21.2" y2="19.2"/><line x1="23.45" y1="16.6" x2="23.45" y2="18.2"/><line x1="25.7" y1="16.6" x2="25.7" y2="19.2"/></g><path d="M14.7,7.2 C12.5,4.2 8.3,4.2 8.3,7.4 C8.3,10.6 12.5,10.6 14.7,7.4 C16.9,4.2 21.1,4.2 21.1,7.4 C21.1,10.6 16.9,10.6 14.7,7.4" fill="none" stroke="#3a3a3a" stroke-width="1.7"/><g stroke="#3a3a3a" stroke-width="1"><line x1="2.2" y1="9.5" x2="2.2" y2="17"/><line x1="26.6" y1="9.5" x2="26.6" y2="17"/><line x1="2.5" y1="13.3" x2="26.5" y2="13.3"/></g><g fill="#3a3a3a"><polygon points="2.5,13.3 7.5,11.6 7.5,15"/><polygon points="26.5,13.3 21.5,11.6 21.5,15"/></g></g></svg>
<div class="p" style="left:36.6px;top:336.9px;width:238px;height:55.2px;"></div>
<div class="p" style="left:277.3px;top:336.9px;width:243.5px;height:55.2px;"></div>
<div class="p" style="left:526.8px;top:336.9px;width:109.9px;height:55.2px;"></div>
<svg class="s" style="left:41px;top:352px;" width="37" height="37" viewBox="0 0 37 37"><g transform="translate(0.100,0.900)"><polygon points="30.5,2.1 30.5,32.6 3.8,17.35" fill="#444"/></g></svg>
<svg class="s" style="left:114px;top:352px;" width="37" height="37" viewBox="0 0 37 37"><g transform="translate(0.000,0.900)"><polygon points="4.8,2.1 4.8,32.6 31.5,17.35" fill="#444"/></g></svg>
<svg class="s" style="left:159px;top:352px;" width="37" height="37" viewBox="0 0 37 37"><g transform="translate(0.300,0.900)"><polygon points="30.5,2.1 30.5,32.6 3.8,17.35" fill="#444"/></g></svg>
<svg class="s" style="left:232px;top:352px;" width="37" height="37" viewBox="0 0 37 37"><g transform="translate(0.200,0.900)"><polygon points="4.8,2.1 4.8,32.6 31.5,17.35" fill="#444"/></g></svg>
<svg class="s" style="left:281px;top:352px;" width="37" height="37" viewBox="0 0 37 37"><g transform="translate(0.600,0.900)"><polygon points="30.5,2.1 30.5,32.6 3.8,17.35" fill="#444"/></g></svg>
<svg class="s" style="left:354px;top:352px;" width="37" height="37" viewBox="0 0 37 37"><g transform="translate(0.500,0.900)"><polygon points="4.8,2.1 4.8,32.6 31.5,17.35" fill="#444"/></g></svg>
<svg class="s" style="left:532px;top:341px;" width="48" height="47" viewBox="0 0 48 47"><g transform="translate(0.500,0.600)"><rect x="17.1" y="7" width="14.7" height="15.9" rx="2" fill="#3e3e3e"/><ellipse cx="24.45" cy="7.2" rx="7.3" ry="1.6" fill="#f4f4f4"/><g fill="#b8b8b8"><ellipse cx="19.4" cy="12.4" rx="1.2" ry="1.6"/><ellipse cx="19.4" cy="18.4" rx="1.2" ry="1.6"/></g><rect x="23.6" y="23" width="1.6" height="15.5" fill="#f6f6f6"/><circle cx="24.4" cy="39.8" r="2.1" fill="#f6f6f6"/></g></svg>
<svg class="s" style="left:583px;top:341px;" width="49" height="47" viewBox="0 0 49 47"><g transform="translate(0.900,0.600)"><g transform="translate(4.9,3.8) scale(1.0)"><rect x="0" y="0" width="23.2" height="2.7" fill="#383838"/><rect x="0.9" y="2.7" width="21.4" height="1.5" fill="#585858"/><rect x="2" y="4.2" width="19.2" height="1.5" fill="#383838"/><rect x="2.8" y="5.7" width="17.6" height="1.1" fill="#585858"/><path d="M3,6.8 L20.2,6.8 L20.2,15.5 Q20.2,18.5 17,18.5 L6.2,18.5 Q3,18.5 3,15.5 Z" fill="#3c3c3c"/><g fill="#b4b4b4"><rect x="6.8" y="10.4" width="1.4" height="1.4"/><rect x="10.9" y="10.4" width="1.4" height="1.4"/><rect x="15" y="10.4" width="1.4" height="1.4"/></g><rect x="8.899999999999999" y="18.5" width="5.4" height="12" fill="#3c3c3c"/><g stroke="#b0b0b0" stroke-width="0.9"><line x1="8.899999999999999" y1="23.9" x2="14.299999999999999" y2="20.3"/><line x1="8.899999999999999" y1="28.7" x2="14.299999999999999" y2="25.1"/></g></g><g stroke="#666" stroke-width="0.7"><line x1="23" y1="22.6" x2="38.5" y2="22.6"/><line x1="21" y1="33.8" x2="38.5" y2="33.8"/><line x1="36.7" y1="13" x2="36.7" y2="21"/><line x1="36.7" y1="35.5" x2="36.7" y2="43.6"/></g><g fill="#666"><polygon points="35.3,19.5 38.1,19.5 36.7,22.4"/><polygon points="35.3,37 38.1,37 36.7,34.1"/></g></g></svg>
<div class="a" style="left:81.3px;top:403.9px;width:3.8px;height:101.5px;background:#a2a2a2"></div>
<div class="p" style="left:91.8px;top:400.3px;width:91px;height:102.7px;"></div>
<div class="p" style="left:189.3px;top:400.2px;width:78.6px;height:102.6px;"></div>
<div class="led " style="left:169.2px;top:403.79999999999995px;width:10px;height:9.2px"></div>
<div class="led lr" style="left:169.2px;top:419.2px;width:10px;height:9.2px"></div>
<div class="led " style="left:169.2px;top:434.59999999999997px;width:10px;height:9.2px"></div>
<div class="led " style="left:169.2px;top:450.0px;width:10px;height:9.2px"></div>
<div class="led lg" style="left:242px;top:403.79999999999995px;width:10px;height:9.2px"></div>
<div class="led" style="left:254.2px;top:403.79999999999995px;width:10px;height:9.2px"></div>
<div class="led lg" style="left:242px;top:419.2px;width:10px;height:9.2px"></div>
<div class="led" style="left:254.2px;top:419.2px;width:10px;height:9.2px"></div>
<div class="led lg" style="left:242px;top:434.59999999999997px;width:10px;height:9.2px"></div>
<div class="led" style="left:254.2px;top:434.59999999999997px;width:10px;height:9.2px"></div>
<div class="led lg" style="left:242px;top:450.0px;width:10px;height:9.2px"></div>
<div class="led" style="left:254.2px;top:450.0px;width:10px;height:9.2px"></div>
<div class="a" style="left:306.1px;top:449.4px;width:40.8px;height:40.5px;border:1.3px solid #4a4a4a;border-radius:3.5px;background:#a7a7a7;box-sizing:border-box"></div>
<svg class="s" style="left:306px;top:449px;" width="42" height="42" viewBox="0 0 42 42"><g transform="translate(0.100,0.400)"><ellipse cx="6.1" cy="5.3" rx="3.4" ry="3.1" fill="url(#ledg)"/><rect x="19.1" y="3.9" width="3.3" height="5.8" fill="#6a6a6a"/><rect x="12.3" y="9.6" width="17.9" height="3.9" rx="0.8" fill="#5c5c5c"/><rect x="12.8" y="13.5" width="13" height="16.8" fill="#6e6e6e"/><rect x="25.8" y="13.5" width="4.4" height="9.1" fill="#6a6a6a"/><rect x="26.3" y="14.9" width="2.9" height="4.4" fill="#c4c4c4"/><rect x="25.3" y="22.6" width="5.8" height="7.7" fill="#686868"/><rect x="13.8" y="30.3" width="15.4" height="5.8" rx="0.6" fill="#6a6a6a"/><g stroke="#5a5a5a" stroke-width="0.5"><line x1="12.8" y1="17" x2="25.8" y2="17"/><line x1="13.8" y1="30.3" x2="29.2" y2="30.3"/></g></g></svg>
<svg class="s" style="left:308px;top:478px;" width="21" height="25" viewBox="0 0 21 25"><g transform="translate(0.000,0.000)"><path d="M4.7,4.2 L4.7,18.5 L8.3,15.2 L10.8,20.3 L13.6,19 L11.3,14 L15.3,14 Z" fill="#2c2c2c" stroke="#c8c8c8" stroke-width="0.8" stroke-linejoin="round"/></g></svg>
<svg class="s" style="left:351px;top:404px;" width="42" height="42" viewBox="0 0 42 42"><g transform="translate(0.400,0.300)"><text x="20.9" y="25.2" text-anchor="middle" font-family="Liberation Sans" font-size="15.5" fill="#444" stroke="#444" stroke-width="0.45" textLength="26.8" lengthAdjust="spacingAndGlyphs">G54</text></g></svg>
<svg class="s" style="left:351px;top:449px;" width="42" height="42" viewBox="0 0 42 42"><g transform="translate(0.400,0.200)"><text x="20.9" y="25.2" text-anchor="middle" font-family="Liberation Sans" font-size="15.5" fill="#444" stroke="#444" stroke-width="0.45" textLength="26.8" lengthAdjust="spacingAndGlyphs">G55</text></g></svg>
<svg class="s" style="left:397px;top:404px;" width="42" height="42" viewBox="0 0 42 42"><g transform="translate(0.100,0.300)"><text x="20.9" y="25.2" text-anchor="middle" font-family="Liberation Sans" font-size="15.5" fill="#444" stroke="#444" stroke-width="0.45" textLength="26.8" lengthAdjust="spacingAndGlyphs">G56</text></g></svg>
<svg class="s" style="left:397px;top:449px;" width="42" height="42" viewBox="0 0 42 42"><g transform="translate(0.100,0.200)"><text x="20.9" y="25.2" text-anchor="middle" font-family="Liberation Sans" font-size="15.5" fill="#444" stroke="#444" stroke-width="0.45" textLength="26.8" lengthAdjust="spacingAndGlyphs">G57</text></g></svg>
<svg class="s" style="left:443px;top:404px;" width="42" height="42" viewBox="0 0 42 42"><g transform="translate(0.200,0.300)"><text x="20.9" y="25.2" text-anchor="middle" font-family="Liberation Sans" font-size="15.5" fill="#444" stroke="#444" stroke-width="0.45" textLength="26.8" lengthAdjust="spacingAndGlyphs">G58</text></g></svg>
<svg class="s" style="left:443px;top:449px;" width="42" height="42" viewBox="0 0 42 42"><g transform="translate(0.200,0.200)"><text x="20.9" y="25.2" text-anchor="middle" font-family="Liberation Sans" font-size="15.5" fill="#444" stroke="#444" stroke-width="0.45" textLength="26.8" lengthAdjust="spacingAndGlyphs">G59</text></g></svg>
<svg class="s" style="left:489px;top:404px;" width="42" height="42" viewBox="0 0 42 42"><g transform="translate(0.100,0.300)"><path d="M15.4,15.4 L15.4,3.8 A11.6,11.6 0 0 0 3.8,15.4 Z" fill="#404040"/><path d="M15.4,15.4 L27,15.4 A11.6,11.6 0 0 1 15.4,27 Z" fill="#404040"/><circle cx="15.4" cy="15.4" r="11.6" fill="none" stroke="#404040" stroke-width="0.7"/><g stroke="#404040" stroke-width="0.8"><line x1="1.6" y1="15.4" x2="28.6" y2="15.4"/><line x1="15.4" y1="1.6" x2="15.4" y2="28"/></g><text x="24.3" y="37.6" text-anchor="middle" font-family="Liberation Sans" font-size="11.5" fill="#3c3c3c" stroke="#3c3c3c" stroke-width="0.35" textLength="19" lengthAdjust="spacingAndGlyphs">XYZ</text></g></svg>
<svg class="s" style="left:489px;top:449px;" width="42" height="42" viewBox="0 0 42 42"><g transform="translate(0.100,0.200)"><polygon points="3.5,14.5 11.5,20 3.5,25.5" fill="#444"/><polygon points="37.5,14.5 29.5,20 37.5,25.5" fill="#444"/><text x="20.4" y="28.6" text-anchor="middle" font-family="Liberation Sans" font-size="24" fill="#444" stroke="#444" stroke-width="1" textLength="12" lengthAdjust="spacingAndGlyphs">0</text></g></svg>
<svg class="s" style="left:534px;top:404px;" width="42" height="42" viewBox="0 0 42 42"><g transform="translate(0.700,0.300)"><text x="19.8" y="24.3" text-anchor="middle" font-family="Liberation Sans" font-size="17.5" fill="#444" stroke="#444" stroke-width="0.5" textLength="31" lengthAdjust="spacingAndGlyphs">M01</text></g></svg>
<div class="led" style="left:537.3000000000001px;top:405.8px;width:6.6px;height:5.8px"></div>
<svg class="s" style="left:580px;top:404px;" width="42" height="42" viewBox="0 0 42 42"><g transform="translate(0.000,0.300)"><g transform="translate(10.6,1.5) scale(0.88)"><rect x="0" y="0" width="23.2" height="2.7" fill="#383838"/><rect x="0.9" y="2.7" width="21.4" height="1.5" fill="#585858"/><rect x="2" y="4.2" width="19.2" height="1.5" fill="#383838"/><rect x="2.8" y="5.7" width="17.6" height="1.1" fill="#585858"/><path d="M3,6.8 L20.2,6.8 L20.2,15.5 Q20.2,18.5 17,18.5 L6.2,18.5 Q3,18.5 3,15.5 Z" fill="#3c3c3c"/><g fill="#b4b4b4"><rect x="6.8" y="10.4" width="1.4" height="1.4"/><rect x="10.9" y="10.4" width="1.4" height="1.4"/><rect x="15" y="10.4" width="1.4" height="1.4"/></g><rect x="9.9" y="18.5" width="3.4" height="9" fill="#3c3c3c"/><g stroke="#b0b0b0" stroke-width="0.9"><line x1="9.9" y1="22.55" x2="13.3" y2="19.85"/><line x1="9.9" y1="26.15" x2="13.3" y2="23.45"/></g></g><text x="22" y="37.3" text-anchor="middle" font-family="Liberation Sans" font-size="14" fill="#3c3c3c" stroke="#3c3c3c" stroke-width="0.4" textLength="25.4" lengthAdjust="spacingAndGlyphs">M03</text></g></svg>
<div class="led " style="left:582.0px;top:405.5px;width:6.8px;height:6px"></div>
<svg class="s" style="left:625px;top:404px;" width="42" height="42" viewBox="0 0 42 42"><g transform="translate(0.300,0.300)"><g transform="translate(10.6,1.5) scale(0.88)"><rect x="0" y="0" width="23.2" height="2.7" fill="#383838"/><rect x="0.9" y="2.7" width="21.4" height="1.5" fill="#585858"/><rect x="2" y="4.2" width="19.2" height="1.5" fill="#383838"/><rect x="2.8" y="5.7" width="17.6" height="1.1" fill="#585858"/><path d="M3,6.8 L20.2,6.8 L20.2,15.5 Q20.2,18.5 17,18.5 L6.2,18.5 Q3,18.5 3,15.5 Z" fill="#3c3c3c"/><g fill="#b4b4b4"><rect x="6.8" y="10.4" width="1.4" height="1.4"/><rect x="10.9" y="10.4" width="1.4" height="1.4"/><rect x="15" y="10.4" width="1.4" height="1.4"/></g><rect x="9.9" y="18.5" width="3.4" height="9" fill="#3c3c3c"/><g stroke="#b0b0b0" stroke-width="0.9"><line x1="9.9" y1="22.55" x2="13.3" y2="19.85"/><line x1="9.9" y1="26.15" x2="13.3" y2="23.45"/></g></g><text x="22" y="37.3" text-anchor="middle" font-family="Liberation Sans" font-size="14" fill="#3c3c3c" stroke="#3c3c3c" stroke-width="0.4" textLength="25.4" lengthAdjust="spacingAndGlyphs">M04</text></g></svg>
<div class="led lr" style="left:627.3px;top:405.8px;width:8px;height:7.5px"></div>
<svg class="s" style="left:671px;top:404px;" width="42" height="42" viewBox="0 0 42 42"><g transform="translate(0.000,0.300)"><g transform="translate(10.6,1.5) scale(0.88)"><rect x="0" y="0" width="23.2" height="2.7" fill="#383838"/><rect x="0.9" y="2.7" width="21.4" height="1.5" fill="#585858"/><rect x="2" y="4.2" width="19.2" height="1.5" fill="#383838"/><rect x="2.8" y="5.7" width="17.6" height="1.1" fill="#585858"/><path d="M3,6.8 L20.2,6.8 L20.2,15.5 Q20.2,18.5 17,18.5 L6.2,18.5 Q3,18.5 3,15.5 Z" fill="#3c3c3c"/><g fill="#b4b4b4"><rect x="6.8" y="10.4" width="1.4" height="1.4"/><rect x="10.9" y="10.4" width="1.4" height="1.4"/><rect x="15" y="10.4" width="1.4" height="1.4"/></g><rect x="9.9" y="18.5" width="3.4" height="9" fill="#3c3c3c"/><g stroke="#b0b0b0" stroke-width="0.9"><line x1="9.9" y1="22.55" x2="13.3" y2="19.85"/><line x1="9.9" y1="26.15" x2="13.3" y2="23.45"/></g></g><text x="22" y="37.3" text-anchor="middle" font-family="Liberation Sans" font-size="14" fill="#3c3c3c" stroke="#3c3c3c" stroke-width="0.4" textLength="25.4" lengthAdjust="spacingAndGlyphs">M05</text></g></svg>
<svg class="s" style="left:534px;top:449px;" width="42" height="42" viewBox="0 0 42 42"><g transform="translate(0.700,0.200)"><rect x="17.8" y="1.6" width="5.5" height="2.9" rx="1" fill="#3a3a3a"/><rect x="17.6" y="4.4" width="5.9" height="1.5" fill="#7c7c7c"/><polygon points="17.3,5.8 23.8,5.8 26.8,19.3 14.3,19.3" fill="#3a3a3a"/><polygon points="12.3,19.3 28.8,19.3 27,22.8 14,22.8" fill="#7a7a7a"/><rect x="16.3" y="22.8" width="8" height="4.6" rx="0.8" fill="#3a3a3a"/><text x="10" y="37.8" font-family="Liberation Sans" font-size="13.5" fill="#3c3c3c" stroke="#3c3c3c" stroke-width="0.4" textLength="25.2" lengthAdjust="spacingAndGlyphs">M06</text></g></svg>
<svg class="s" style="left:580px;top:449px;" width="42" height="42" viewBox="0 0 42 42"><g transform="translate(0.000,0.200)"><path d="M3.5,11.5 L10,11.5 L10,19 L14.5,21.5 L12.5,25.5 L3.5,21.5 Z" fill="#7a7a7a"/><g stroke="#c4c4c4" stroke-width="0.5"><line x1="12" y1="23" x2="19" y2="21"/><line x1="11.5" y1="24" x2="17" y2="26"/><line x1="10.5" y1="24.5" x2="8.5" y2="28"/><line x1="12" y1="25" x2="13" y2="28.5"/></g><g transform="translate(10.6,1.5) scale(0.88)"><rect x="0" y="0" width="23.2" height="2.7" fill="#383838"/><rect x="0.9" y="2.7" width="21.4" height="1.5" fill="#585858"/><rect x="2" y="4.2" width="19.2" height="1.5" fill="#383838"/><rect x="2.8" y="5.7" width="17.6" height="1.1" fill="#585858"/><path d="M3,6.8 L20.2,6.8 L20.2,15.5 Q20.2,18.5 17,18.5 L6.2,18.5 Q3,18.5 3,15.5 Z" fill="#3c3c3c"/><g fill="#b4b4b4"><rect x="6.8" y="10.4" width="1.4" height="1.4"/><rect x="10.9" y="10.4" width="1.4" height="1.4"/><rect x="15" y="10.4" width="1.4" height="1.4"/></g><rect x="9.9" y="18.5" width="3.4" height="9" fill="#3c3c3c"/><g stroke="#b0b0b0" stroke-width="0.9"><line x1="9.9" y1="22.55" x2="13.3" y2="19.85"/><line x1="9.9" y1="26.15" x2="13.3" y2="23.45"/></g></g><text x="22" y="37.3" text-anchor="middle" font-family="Liberation Sans" font-size="14" fill="#3c3c3c" stroke="#3c3c3c" stroke-width="0.4" textLength="25.4" lengthAdjust="spacingAndGlyphs">M07</text></g></svg>
<div class="led" style="left:582.5px;top:451.4px;width:7px;height:6.2px"></div>
<svg class="s" style="left:625px;top:449px;" width="42" height="42" viewBox="0 0 42 42"><g transform="translate(0.300,0.200)"><path d="M35.2,9.5 L38.2,9.5 L38.2,17.5 L29.5,21 L28.7,20 L35.2,16.5 Z" fill="#7a7a7a"/><path d="M28.2,21.8 Q30.8,25 30.6,26.3 A2.4,2.4 0 0 1 25.8,26.3 Q25.6,25 28.2,21.8 Z" fill="#6a6a6a"/><g transform="translate(10.6,1.5) scale(0.88)"><rect x="0" y="0" width="23.2" height="2.7" fill="#383838"/><rect x="0.9" y="2.7" width="21.4" height="1.5" fill="#585858"/><rect x="2" y="4.2" width="19.2" height="1.5" fill="#383838"/><rect x="2.8" y="5.7" width="17.6" height="1.1" fill="#585858"/><path d="M3,6.8 L20.2,6.8 L20.2,15.5 Q20.2,18.5 17,18.5 L6.2,18.5 Q3,18.5 3,15.5 Z" fill="#3c3c3c"/><g fill="#b4b4b4"><rect x="6.8" y="10.4" width="1.4" height="1.4"/><rect x="10.9" y="10.4" width="1.4" height="1.4"/><rect x="15" y="10.4" width="1.4" height="1.4"/></g><rect x="9.9" y="18.5" width="3.4" height="9" fill="#3c3c3c"/><g stroke="#b0b0b0" stroke-width="0.9"><line x1="9.9" y1="22.55" x2="13.3" y2="19.85"/><line x1="9.9" y1="26.15" x2="13.3" y2="23.45"/></g></g><text x="22" y="37.3" text-anchor="middle" font-family="Liberation Sans" font-size="14" fill="#3c3c3c" stroke="#3c3c3c" stroke-width="0.4" textLength="25.4" lengthAdjust="spacingAndGlyphs">M08</text></g></svg>
<div class="led" style="left:627.8px;top:451.4px;width:7px;height:6.2px"></div>
<svg class="s" style="left:671px;top:449px;" width="42" height="42" viewBox="0 0 42 42"><g transform="translate(0.000,0.200)"><path d="M3.5,11.5 L10,11.5 L10,19 L14.5,21.5 L12.5,25.5 L3.5,21.5 Z" fill="#7a7a7a"/><g stroke="#c4c4c4" stroke-width="0.5"><line x1="12" y1="23" x2="19" y2="21"/><line x1="11.5" y1="24" x2="17" y2="26"/><line x1="10.5" y1="24.5" x2="8.5" y2="28"/><line x1="12" y1="25" x2="13" y2="28.5"/></g><path d="M35.2,9.5 L38.2,9.5 L38.2,17.5 L29.5,21 L28.7,20 L35.2,16.5 Z" fill="#7a7a7a"/><path d="M28.2,21.8 Q30.8,25 30.6,26.3 A2.4,2.4 0 0 1 25.8,26.3 Q25.6,25 28.2,21.8 Z" fill="#6a6a6a"/><g transform="translate(10.6,1.5) scale(0.88)"><rect x="0" y="0" width="23.2" height="2.7" fill="#383838"/><rect x="0.9" y="2.7" width="21.4" height="1.5" fill="#585858"/><rect x="2" y="4.2" width="19.2" height="1.5" fill="#383838"/><rect x="2.8" y="5.7" width="17.6" height="1.1" fill="#585858"/><path d="M3,6.8 L20.2,6.8 L20.2,15.5 Q20.2,18.5 17,18.5 L6.2,18.5 Q3,18.5 3,15.5 Z" fill="#3c3c3c"/><g fill="#b4b4b4"><rect x="6.8" y="10.4" width="1.4" height="1.4"/><rect x="10.9" y="10.4" width="1.4" height="1.4"/><rect x="15" y="10.4" width="1.4" height="1.4"/></g><rect x="9.9" y="18.5" width="3.4" height="9" fill="#3c3c3c"/><g stroke="#b0b0b0" stroke-width="0.9"><line x1="9.9" y1="22.55" x2="13.3" y2="19.85"/><line x1="9.9" y1="26.15" x2="13.3" y2="23.45"/></g></g><g stroke="#e80c0c" stroke-width="2.3" stroke-linecap="round"><line x1="3" y1="12.5" x2="8.6" y2="18.1"/><line x1="8.6" y1="12.5" x2="3" y2="18.1"/></g><g stroke="#e80c0c" stroke-width="2.3" stroke-linecap="round"><line x1="32.5" y1="11.5" x2="38.1" y2="17.1"/><line x1="38.1" y1="11.5" x2="32.5" y2="17.1"/></g><text x="22" y="37.3" text-anchor="middle" font-family="Liberation Sans" font-size="14" fill="#3c3c3c" stroke="#3c3c3c" stroke-width="0.4" textLength="25.4" lengthAdjust="spacingAndGlyphs">M09</text></g></svg>
<svg class="s" style="left:734px;top:403px;" width="40" height="39" viewBox="0 0 40 39"><g transform="translate(0.000,0.600)"><rect x="4.2" y="4.1" width="4.5" height="29" fill="#444"/><polygon points="9.9,17.5 34.9,4.1 34.9,33.1" fill="#444"/></g></svg>
<svg class="s" style="left:775px;top:403px;" width="39" height="39" viewBox="0 0 39 39"><g transform="translate(0.200,0.600)"><path d="M18,13.7 L22.2,13.7 A9.07,9.07 0 0 1 22.2,31.85 L9.6,31.85" fill="none" stroke="#444" stroke-width="4.3"/><polygon points="4.6,13.7 18.7,4.8 18.7,22.6" fill="#444"/></g></svg>
<svg class="s" style="left:816px;top:403px;" width="39" height="39" viewBox="0 0 39 39"><g transform="translate(0.000,0.600)"><rect x="3.5" y="4.1" width="4.6" height="29" fill="#444"/><polygon points="9.7,4.1 35.8,18.6 9.7,33.1" fill="#444"/></g></svg>
<svg class="s" style="left:734px;top:443px;" width="59" height="59" viewBox="0 0 59 59"><g transform="translate(0.800,0.900)"><defs><linearGradient id="stg" x1="0" y1="0" x2="0" y2="1"><stop offset="0" stop-color="#7a0606"/><stop offset="0.45" stop-color="#c00c0c"/><stop offset="1" stop-color="#e81818"/></linearGradient></defs><polygon points="19.60,4.70 39.40,4.70 53.40,18.70 53.40,38.50 39.40,52.50 19.60,52.50 5.60,38.50 5.60,18.70" fill="#ee1414"/><polygon points="20.10,5.90 38.90,5.90 52.20,19.20 52.20,38.00 38.90,51.30 20.10,51.30 6.80,38.00 6.80,19.20" fill="#f6d0d0"/><polygon points="20.43,6.70 38.57,6.70 51.40,19.53 51.40,37.67 38.57,50.50 20.43,50.50 7.60,37.67 7.60,19.53" fill="url(#stg)"/><path d="M10,22 Q29.5,12 49,22 L49,18 L40,7.5 L19,7.5 L10,18 Z" fill="#ffffff" opacity="0.13"/><text x="10.3" y="34.7" font-family="Liberation Sans" font-weight="bold" font-size="17.5" fill="#fff" textLength="39.5" lengthAdjust="spacingAndGlyphs">STOP</text></g></svg>
<svg class="s" style="left:795px;top:443px;" width="60" height="59" viewBox="0 0 60 59"><g transform="translate(0.700,0.900)"><polygon points="6.1,2.9 50.4,27.9 6.1,52.9" fill="#444"/></g></svg>
<div class="p" style="left:86.3px;top:396.9px;width:632.3px;height:108.7px;"></div>
<div class="p" style="left:727.6px;top:396.5px;width:134.2px;height:109.4px;"></div>
<svg class="s" style="left:0;top:0" width="899" height="550" font-family="Liberation Sans"><text x="284.55" y="38.20" font-size="9.00" fill="#dce0e3" font-weight="normal" textLength="329.90" lengthAdjust="spacingAndGlyphs" >(22:35:53) myCNC control software. Ver:1.88.4247- [/home/sk/DNC//ITEST/2020/10/2/1234.dxf.nc]</text><text x="733.15" y="62.30" font-size="9.71" fill="#f46c28" font-weight="normal" textLength="20.50" lengthAdjust="spacingAndGlyphs" stroke="#f46c28" stroke-width="0.35" >G54:</text><text x="733.15" y="99.00" font-size="9.71" fill="#f46c28" font-weight="normal" textLength="20.50" lengthAdjust="spacingAndGlyphs" stroke="#f46c28" stroke-width="0.35" >G54:</text><text x="733.15" y="135.70" font-size="9.71" fill="#f46c28" font-weight="normal" textLength="20.50" lengthAdjust="spacingAndGlyphs" stroke="#f46c28" stroke-width="0.35" >G54:</text><text x="739.35" y="82.70" font-size="9.14" fill="#d8e020" font-weight="normal" textLength="22.00" lengthAdjust="spacingAndGlyphs" stroke="#d8e020" stroke-width="0.25" >0.000</text><text x="739.35" y="119.10" font-size="9.14" fill="#d8e020" font-weight="normal" textLength="22.00" lengthAdjust="spacingAndGlyphs" stroke="#d8e020" stroke-width="0.25" >0.000</text><text x="739.35" y="155.50" font-size="9.14" fill="#d8e020" font-weight="normal" textLength="22.00" lengthAdjust="spacingAndGlyphs" stroke="#d8e020" stroke-width="0.25" >0.000</text><text x="739.45" y="180.20" font-size="8.86" fill="#d8e020" font-weight="normal" textLength="18.70" lengthAdjust="spacingAndGlyphs" stroke="#d8e020" stroke-width="0.25" >0.00(</text><text x="782.05" y="61.80" font-size="7.14" fill="#202020" font-weight="normal" textLength="12.80" lengthAdjust="spacingAndGlyphs" stroke="#202020" stroke-width="0.05" >Tool</text><text x="784.05" y="73.20" font-size="7.86" fill="#f8f8f8" font-weight="normal" textLength="9.10" lengthAdjust="spacingAndGlyphs" stroke="#f8f8f8" stroke-width="0.2" >T3</text><text x="778.15" y="88.20" font-size="7.14" fill="#202020" font-weight="normal" textLength="20.30" lengthAdjust="spacingAndGlyphs" stroke="#202020" stroke-width="0.05" >Length</text><text x="776.05" y="99.70" font-size="8.57" fill="#f8f8f8" font-weight="normal" textLength="27.50" lengthAdjust="spacingAndGlyphs" stroke="#f8f8f8" stroke-width="0.2" >136.167</text><text x="774.05" y="111.10" font-size="6.86" fill="#202020" font-weight="normal" textLength="29.30" lengthAdjust="spacingAndGlyphs" stroke="#202020" stroke-width="0.05" >Correct. Z</text><text x="778.75" y="121.90" font-size="6.86" fill="#f8f8f8" font-weight="normal" textLength="19.40" lengthAdjust="spacingAndGlyphs" stroke="#f8f8f8" stroke-width="0.2" >0.000</text><text x="774.05" y="135.30" font-size="7.14" fill="#202020" font-weight="normal" textLength="28.90" lengthAdjust="spacingAndGlyphs" stroke="#202020" stroke-width="0.05" >Correct. R</text><text x="778.75" y="146.40" font-size="6.86" fill="#f8f8f8" font-weight="normal" textLength="19.40" lengthAdjust="spacingAndGlyphs" stroke="#f8f8f8" stroke-width="0.2" >0.000</text><text x="769.25" y="159.50" font-size="7.14" fill="#202020" font-weight="normal" textLength="38.50" lengthAdjust="spacingAndGlyphs" stroke="#202020" stroke-width="0.05" >Flood,[ml/hr]</text><text x="782.05" y="176.70" font-size="7.29" fill="#f8f8f8" font-weight="normal" textLength="13.30" lengthAdjust="spacingAndGlyphs" stroke="#f8f8f8" stroke-width="0.2" >200</text><text x="824.05" y="66.20" font-size="11.71" fill="#ff1a1a" font-weight="normal" textLength="34.40" lengthAdjust="spacingAndGlyphs" stroke="#ff1a1a" stroke-width="0.35" >19.105</text><text x="830.05" y="102.50" font-size="11.43" fill="#ff1a1a" font-weight="normal" textLength="28.40" lengthAdjust="spacingAndGlyphs" stroke="#ff1a1a" stroke-width="0.35" >0.000</text><text x="830.05" y="139.10" font-size="11.43" fill="#ff1a1a" font-weight="normal" textLength="28.40" lengthAdjust="spacingAndGlyphs" stroke="#ff1a1a" stroke-width="0.35" >0.000</text><text x="836.05" y="175.80" font-size="11.43" fill="#ff1a1a" font-weight="normal" textLength="22.40" lengthAdjust="spacingAndGlyphs" stroke="#ff1a1a" stroke-width="0.35" >0.00</text><text x="832.05" y="83.00" font-size="9.71" fill="#d8e020" font-weight="normal" textLength="26.40" lengthAdjust="spacingAndGlyphs" stroke="#d8e020" stroke-width="0.25" >19.105</text><text x="837.05" y="119.50" font-size="9.14" fill="#d8e020" font-weight="normal" textLength="21.40" lengthAdjust="spacingAndGlyphs" stroke="#d8e020" stroke-width="0.25" >0.000</text><text x="837.05" y="156.10" font-size="9.14" fill="#d8e020" font-weight="normal" textLength="21.40" lengthAdjust="spacingAndGlyphs" stroke="#d8e020" stroke-width="0.25" >0.000</text><text x="841.05" y="192.50" font-size="9.14" fill="#d8e020" font-weight="normal" textLength="17.40" lengthAdjust="spacingAndGlyphs" stroke="#d8e020" stroke-width="0.25" >0.00</text><text x="738.75" y="196.40" font-size="9.57" fill="#333" font-weight="normal" textLength="26.10" lengthAdjust="spacingAndGlyphs" stroke="#333" stroke-width="0.1" >Values</text><text x="780.15" y="196.40" font-size="9.57" fill="#333" font-weight="normal" textLength="20.90" lengthAdjust="spacingAndGlyphs" stroke="#333" stroke-width="0.1" >Error</text><text x="709.45" y="290.80" font-size="10.43" fill="#f2f2f2" font-weight="normal" textLength="6.20" lengthAdjust="spacingAndGlyphs" stroke="#f2f2f2" stroke-width="0.15" >0</text><text x="794.25" y="279.90" font-size="10.43" fill="#f2f2f2" font-weight="normal" textLength="6.50" lengthAdjust="spacingAndGlyphs" stroke="#f2f2f2" stroke-width="0.15" >0</text><text x="709.45" y="373.70" font-size="10.00" fill="#f2f2f2" font-weight="normal" textLength="6.30" lengthAdjust="spacingAndGlyphs" stroke="#f2f2f2" stroke-width="0.15" >0</text><text x="62.85" y="349.10" font-size="7.86" fill="#262626" font-weight="normal" textLength="63.20" lengthAdjust="spacingAndGlyphs" stroke="#262626" stroke-width="0.1" >Jog over speed,[%]</text><text x="187.05" y="349.10" font-size="7.86" fill="#262626" font-weight="normal" textLength="52.50" lengthAdjust="spacingAndGlyphs" stroke="#262626" stroke-width="0.1" >Over Speed,[%]</text><text x="299.25" y="349.50" font-size="8.00" fill="#262626" font-weight="normal" textLength="72.50" lengthAdjust="spacingAndGlyphs" stroke="#262626" stroke-width="0.1" >Spindle Speed, [rpm]</text><text x="89.55" y="373.90" font-size="9.71" fill="#f6f6f6" font-weight="normal" textLength="10.90" lengthAdjust="spacingAndGlyphs" stroke="#f6f6f6" stroke-width="0.05" >98</text><text x="205.25" y="373.90" font-size="9.71" fill="#f6f6f6" font-weight="normal" textLength="15.40" lengthAdjust="spacingAndGlyphs" stroke="#f6f6f6" stroke-width="0.05" >110</text><text x="327.95" y="373.80" font-size="9.71" fill="#f6f6f6" font-weight="normal" textLength="15.70" lengthAdjust="spacingAndGlyphs" stroke="#f6f6f6" stroke-width="0.05" >100</text><text x="415.65" y="351.30" font-size="8.00" fill="#262626" font-weight="normal" textLength="57.70" lengthAdjust="spacingAndGlyphs" stroke="#262626" stroke-width="0.1" >Tool Length, mm</text><text x="458.35" y="365.60" font-size="8.29" fill="#262626" font-weight="normal" textLength="15.00" lengthAdjust="spacingAndGlyphs" stroke="#262626" stroke-width="0.1" >Tool</text><text x="414.95" y="381.00" font-size="8.29" fill="#262626" font-weight="normal" textLength="58.40" lengthAdjust="spacingAndGlyphs" stroke="#262626" stroke-width="0.1" >Z correction, mm</text><text x="481.45" y="351.30" font-size="8.00" fill="#f6f6f6" font-weight="normal" textLength="27.70" lengthAdjust="spacingAndGlyphs" stroke="#f6f6f6" stroke-width="0.15" >136.167</text><text x="489.05" y="366.70" font-size="10.00" fill="#f6f6f6" font-weight="normal" textLength="10.70" lengthAdjust="spacingAndGlyphs" stroke="#f6f6f6" stroke-width="0.2" >T3</text><text x="487.35" y="381.00" font-size="7.14" fill="#f6f6f6" font-weight="normal" textLength="19.30" lengthAdjust="spacingAndGlyphs" stroke="#f6f6f6" stroke-width="0.15" >0.000</text><text x="48.45" y="420.60" font-size="13.57" fill="#4c4c4c" font-weight="normal" textLength="27.00" lengthAdjust="spacingAndGlyphs" stroke="#4c4c4c" stroke-width="0.5" >Map</text><text x="38.35" y="445.80" font-size="13.57" fill="#4c4c4c" font-weight="normal" textLength="41.30" lengthAdjust="spacingAndGlyphs" stroke="#4c4c4c" stroke-width="0.5" >G-code</text><text x="52.65" y="471.00" font-size="13.57" fill="#4c4c4c" font-weight="normal" textLength="20.90" lengthAdjust="spacingAndGlyphs" stroke="#4c4c4c" stroke-width="0.5" >Mill</text><text x="53.25" y="496.40" font-size="12.86" fill="#4c4c4c" font-weight="normal" textLength="22.20" lengthAdjust="spacingAndGlyphs" stroke="#4c4c4c" stroke-width="0.5" >Log</text><text x="146.25" y="411.00" font-size="8.00" fill="#161616" font-weight="normal" textLength="22.50" lengthAdjust="spacingAndGlyphs" stroke="#161616" stroke-width="0.25" >Spindle</text><text x="131.25" y="426.40" font-size="8.00" fill="#161616" font-weight="normal" textLength="37.50" lengthAdjust="spacingAndGlyphs" stroke="#161616" stroke-width="0.25" >Spindle CCW</text><text x="155.35" y="441.80" font-size="8.00" fill="#161616" font-weight="normal" textLength="13.40" lengthAdjust="spacingAndGlyphs" stroke="#161616" stroke-width="0.25" >Mist</text><text x="152.05" y="457.20" font-size="8.00" fill="#161616" font-weight="normal" textLength="16.70" lengthAdjust="spacingAndGlyphs" stroke="#161616" stroke-width="0.25" >Flood</text><text x="217.85" y="411.00" font-size="8.00" fill="#161616" font-weight="normal" textLength="23.90" lengthAdjust="spacingAndGlyphs" stroke="#161616" stroke-width="0.25" >Home X</text><text x="217.85" y="426.40" font-size="8.00" fill="#161616" font-weight="normal" textLength="23.90" lengthAdjust="spacingAndGlyphs" stroke="#161616" stroke-width="0.25" >Home Y</text><text x="217.85" y="441.80" font-size="8.00" fill="#161616" font-weight="normal" textLength="23.90" lengthAdjust="spacingAndGlyphs" stroke="#161616" stroke-width="0.25" >Home Z</text><text x="217.85" y="457.20" font-size="8.00" fill="#161616" font-weight="normal" textLength="23.90" lengthAdjust="spacingAndGlyphs" stroke="#161616" stroke-width="0.25" >Home A</text><text x="307.45" y="410.90" font-size="6.57" fill="#262626" font-weight="normal" textLength="38.00" lengthAdjust="spacingAndGlyphs" stroke="#262626" stroke-width="0.1" >Flood,[ml/hr]</text><text x="319.45" y="433.40" font-size="8.86" fill="#f6f6f6" font-weight="normal" textLength="14.40" lengthAdjust="spacingAndGlyphs" stroke="#f6f6f6" stroke-width="0.2" >200</text></svg>
</body></html>
